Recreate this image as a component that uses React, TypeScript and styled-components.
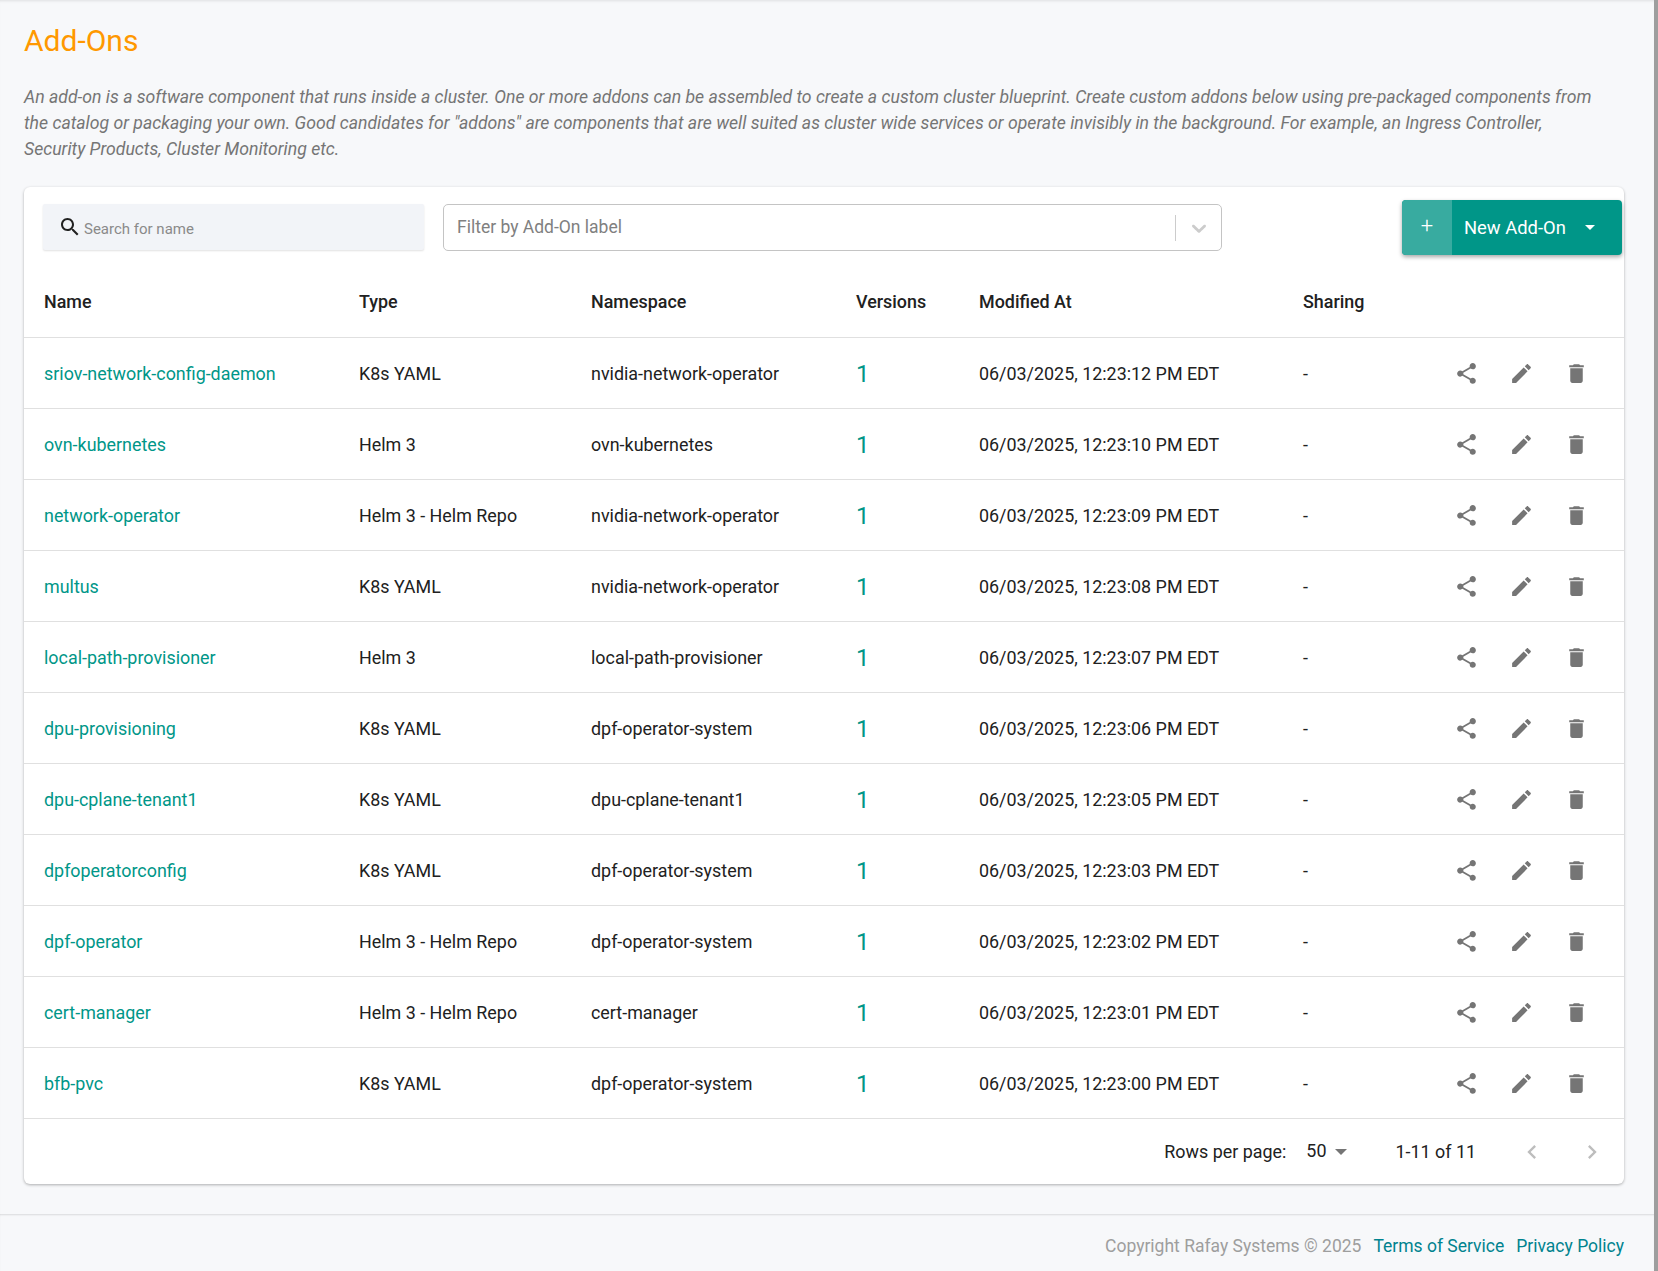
import React from "react";
import styled, { createGlobalStyle } from "styled-components";

const Global = createGlobalStyle`
  html, body { margin: 0; padding: 0; height: 100%; overflow: hidden; }
  body { font-family: Roboto, "Liberation Sans", sans-serif; background: #f7f8fa; color: #212121; }
  #root { height: 100%; }
`;

const Shell = styled.div`
  display: flex;
  height: 1271px;
`;
const Scrollbar = styled.div`
  width: 4px;
  flex: none;
  background: #9e9e9e;
`;
const Page = styled.div`
  flex: 1;
  min-width: 0;
  display: flex;
  flex-direction: column;
  box-shadow: inset 0 3px 3px -2px rgba(0, 0, 0, 0.1);
`;
const Main = styled.main`
  flex: 1;
  padding: 21px 30px 0 24px;
`;
const Title = styled.h1`
  margin: 0;
  font-size: 30px;
  line-height: 40px;
  font-weight: 400;
  color: #ff9800;
`;
const Description = styled.p`
  margin: 23px 0 0;
  padding-right: 24px;
  font-size: 17.65px;
  line-height: 26px;
  font-style: italic;
  color: #757575;
`;
const Card = styled.section`
  margin-top: 25px;
  background: #fff;
  border-radius: 6px;
  box-shadow: 0 1px 3px rgba(0, 0, 0, 0.3);
`;
const Toolbar = styled.div`
  display: flex;
  align-items: flex-start;
  height: 80px;
  padding: 13px 2px 0 19px;
  box-sizing: border-box;
`;
const Search = styled.div`
  width: 381px;
  height: 46px;
  margin-top: 4px;
  flex: none;
  display: flex;
  align-items: center;
  gap: 2px;
  padding: 0 15px;
  box-sizing: border-box;
  background: #f2f4f8;
  border-radius: 2px;
  box-shadow: 0 1px 2px rgba(0, 0, 0, 0.12);
  font-size: 15px;
  color: #8a8a8a;
`;
const SearchIcon = styled.span`
  color: #212121;
`;
const SearchText = styled.span`
  padding-top: 3px;
`;
const Select = styled.div`
  width: 779px;
  height: 47px;
  margin: 4px 0 0 19px;
  flex: none;
  display: flex;
  align-items: center;
  box-sizing: border-box;
  border: 1px solid #c4c4c4;
  border-radius: 5px;
  padding-left: 13px;
  font-size: 17.5px;
  color: #808080;
`;
const SelectLabel = styled.span`
  flex: 1;
  padding-bottom: 1px;
`;
const SelectDivider = styled.span`
  width: 1px;
  height: 26px;
  background: #ccc;
`;
const SelectArrow = styled.span`
  width: 45px;
  display: flex;
  justify-content: center;
  color: #ccc;
`;
const NewButton = styled.button`
  margin-left: auto;
  width: 220px;
  height: 55px;
  padding: 0;
  border: 0;
  display: flex;
  background: #009688;
  border-radius: 4px;
  overflow: hidden;
  color: #fff;
  font: 400 18.4px Roboto, sans-serif;
  box-shadow: 0 2px 4px rgba(0, 0, 0, 0.35);
`;
const ButtonPlus = styled.span`
  width: 50px;
  background: #38aba0;
  font-size: 22px;
  line-height: 52px;
  font-weight: 300;
`;
const ButtonLabel = styled.span`
  flex: 1;
  display: flex;
  align-items: center;
  padding-left: 12px;
`;
const ButtonCaret = styled.span`
  margin: 0 27px 0 auto;
  width: 0;
  height: 0;
  border: 5.5px solid transparent;
  border-top-color: #fff;
  border-bottom-width: 0;
`;
const Row = styled.div<{ $head?: boolean }>`
  display: grid;
  grid-template-columns: 315px 232px 265px 123px 324px 1fr auto;
  align-items: center;
  height: 71px;
  padding-top: ${(p) => (p.$head ? 0 : 1)}px;
  box-sizing: border-box;
  border-bottom: 1px solid #e0e0e0;
  font-size: 17.9px;
  font-weight: ${(p) => (p.$head ? 500 : 400)};
  color: #212121;
  line-height: 24px;
`;
const Cell = styled.div`
  padding-left: 20px;
  white-space: nowrap;
`;
const NameLink = styled.a`
  color: #009688;
  text-decoration: none;
`;
const Version = styled(Cell)`
  color: #009688;
  font-size: 24px;
`;
const Actions = styled.div`
  display: flex;
  gap: 30px;
  padding-right: 35px;
  color: #757575;
`;
const Icon = styled.svg<{ $size?: number }>`
  display: block;
  width: ${(p) => p.$size ?? 24}px;
  height: ${(p) => p.$size ?? 24}px;
  fill: currentColor;
`;
const Pagination = styled.div`
  height: 65px;
  display: flex;
  align-items: center;
  justify-content: flex-end;
  padding-right: 18px;
  font-size: 17.9px;
  color: #212121;
`;
const PageSize = styled.span`
  margin-left: 20px;
  display: flex;
  align-items: center;
  gap: 9px;
  padding-bottom: 2px;
`;
const SizeCaret = styled.span`
  width: 0;
  height: 0;
  border: 6px solid transparent;
  border-top-color: #757575;
  border-bottom-width: 0;
  margin-top: 2px;
`;
const PageRange = styled.span`
  margin-left: 48px;
`;
const Nav = styled.span`
  display: flex;
  gap: 32px;
  margin-left: 42px;
  color: #bdbdbd;
`;
const PageFooter = styled.footer`
  height: 57px;
  display: flex;
  align-items: center;
  justify-content: flex-end;
  gap: 12px;
  padding: 6px 30px 0 0;
  box-sizing: border-box;
  font-size: 17.5px;
  box-shadow: inset 0 2px 2px -1px rgba(0, 0, 0, 0.12);
`;
const Copyright = styled.span`
  color: #9e9e9e;
`;
const FooterLink = styled.a`
  color: #00838f;
  text-decoration: none;
`;

const SVG = ({ d, size }: { d: string; size?: number }) => (
  <Icon viewBox="0 0 24 24" $size={size}>
    <path d={d} />
  </Icon>
);
const share = "M18 16.08c-.76 0-1.44.3-1.96.77L8.91 12.7c.05-.23.09-.46.09-.7s-.04-.47-.09-.7l7.05-4.11c.54.5 1.25.81 2.04.81 1.66 0 3-1.34 3-3s-1.34-3-3-3-3 1.34-3 3c0 .24.04.47.09.7L8.04 9.81C7.5 9.31 6.79 9 6 9c-1.66 0-3 1.34-3 3s1.34 3 3 3c.79 0 1.5-.31 2.04-.81l7.12 4.16c-.05.21-.08.43-.08.65 0 1.61 1.31 2.92 2.92 2.92 1.61 0 2.92-1.31 2.92-2.92s-1.31-2.92-2.92-2.92z";
const edit = "M3 17.25V21h3.75L17.81 9.94l-3.75-3.75L3 17.25zM20.71 7.04c.39-.39.39-1.02 0-1.41l-2.34-2.34c-.39-.39-1.02-.39-1.41 0l-1.83 1.83 3.75 3.75 1.83-1.83z";
const trash = "M6 19c0 1.1.9 2 2 2h8c1.1 0 2-.9 2-2V7H6v12zM19 4h-3.5l-1-1h-5l-1 1H5v2h14V4z";
const search = "M15.5 14h-.79l-.28-.27C15.41 12.59 16 11.11 16 9.5 16 5.91 13.09 3 9.5 3S3 5.91 3 9.5 5.91 16 9.5 16c1.61 0 3.09-.59 4.23-1.57l.27.28v.79l5 4.99L20.49 19l-4.99-5zm-6 0C7.01 14 5 11.99 5 9.5S7.01 5 9.5 5 14 7.01 14 9.5 11.99 14 9.5 14z";
const prev = "M15.41 7.41 14 6l-6 6 6 6 1.41-1.41L10.83 12z";
const next = "M10 6 8.59 7.41 13.17 12l-4.58 4.59L10 18l6-6z";
const reactSelectChevron = "M4.516 7.548c0.436-0.446 1.043-0.481 1.576 0l3.908 3.747 3.908-3.747c0.533-0.481 1.141-0.446 1.576 0 0.436 0.445 0.408 1.197 0 1.615-0.406 0.418-4.695 4.502-4.695 4.502-0.217 0.223-0.502 0.335-0.787 0.335s-0.57-0.112-0.789-0.335c0 0-4.287-4.084-4.695-4.502s-0.436-1.17 0-1.615z";

const rows = [
  ["sriov-network-config-daemon", "K8s YAML", "nvidia-network-operator", "06/03/2025, 12:23:12 PM EDT"],
  ["ovn-kubernetes", "Helm 3", "ovn-kubernetes", "06/03/2025, 12:23:10 PM EDT"],
  ["network-operator", "Helm 3 - Helm Repo", "nvidia-network-operator", "06/03/2025, 12:23:09 PM EDT"],
  ["multus", "K8s YAML", "nvidia-network-operator", "06/03/2025, 12:23:08 PM EDT"],
  ["local-path-provisioner", "Helm 3", "local-path-provisioner", "06/03/2025, 12:23:07 PM EDT"],
  ["dpu-provisioning", "K8s YAML", "dpf-operator-system", "06/03/2025, 12:23:06 PM EDT"],
  ["dpu-cplane-tenant1", "K8s YAML", "dpu-cplane-tenant1", "06/03/2025, 12:23:05 PM EDT"],
  ["dpfoperatorconfig", "K8s YAML", "dpf-operator-system", "06/03/2025, 12:23:03 PM EDT"],
  ["dpf-operator", "Helm 3 - Helm Repo", "dpf-operator-system", "06/03/2025, 12:23:02 PM EDT"],
  ["cert-manager", "Helm 3 - Helm Repo", "cert-manager", "06/03/2025, 12:23:01 PM EDT"],
  ["bfb-pvc", "K8s YAML", "dpf-operator-system", "06/03/2025, 12:23:00 PM EDT"],
];

export default function App() {
  return (
    <Shell>
      <Global />
      <Page>
        <Main>
          <Title>Add-Ons</Title>
          <Description>
            An add-on is a software component that runs inside a cluster. One or more addons can be assembled to create a custom cluster blueprint. Create custom addons below using pre-packaged components from the catalog or packaging your own. Good candidates for "addons" are components that are well suited as cluster wide services or operate invisibly in the background. For example, an Ingress Controller, Security Products, Cluster Monitoring etc.
          </Description>
          <Card>
            <Toolbar>
              <Search>
                <SearchIcon>
                  <SVG d={search} />
                </SearchIcon>
                <SearchText>Search for name</SearchText>
              </Search>
              <Select>
                <SelectLabel>Filter by Add-On label</SelectLabel>
                <SelectDivider />
                <SelectArrow>
                  <svg width="24" height="24" viewBox="0 0 20 20" fill="currentColor">
                    <path d={reactSelectChevron} />
                  </svg>
                </SelectArrow>
              </Select>
              <NewButton>
                <ButtonPlus>+</ButtonPlus>
                <ButtonLabel>
                  New Add-On
                  <ButtonCaret />
                </ButtonLabel>
              </NewButton>
            </Toolbar>
            <Row $head>
              <Cell>Name</Cell>
              <Cell>Type</Cell>
              <Cell>Namespace</Cell>
              <Cell>Versions</Cell>
              <Cell>Modified At</Cell>
              <Cell>Sharing</Cell>
              <div />
            </Row>
            {rows.map((r) => (
              <Row key={r[0]}>
                <Cell>
                  <NameLink href="#">{r[0]}</NameLink>
                </Cell>
                <Cell>{r[1]}</Cell>
                <Cell>{r[2]}</Cell>
                <Version>1</Version>
                <Cell>{r[3]}</Cell>
                <Cell>-</Cell>
                <Actions>
                  <SVG d={share} size={25} />
                  <SVG d={edit} size={25} />
                  <SVG d={trash} size={25} />
                </Actions>
              </Row>
            ))}
            <Pagination>
              <span>Rows per page:</span>
              <PageSize>
                50
                <SizeCaret />
              </PageSize>
              <PageRange>1-11 of 11</PageRange>
              <Nav>
                <SVG d={prev} size={28} />
                <SVG d={next} size={28} />
              </Nav>
            </Pagination>
          </Card>
        </Main>
        <PageFooter>
          <Copyright>Copyright Rafay Systems © 2025</Copyright>
          <FooterLink href="#">Terms of Service</FooterLink>
          <FooterLink href="#">Privacy Policy</FooterLink>
        </PageFooter>
      </Page>
      <Scrollbar />
    </Shell>
  );
}
